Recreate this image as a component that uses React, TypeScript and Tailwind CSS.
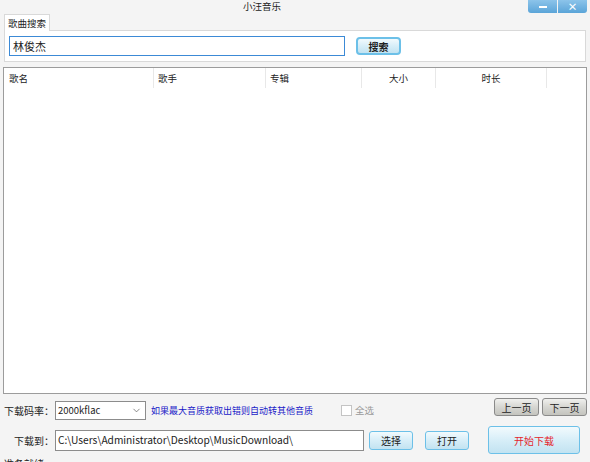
import { ChevronDown } from 'lucide-react';

const font = { fontFamily: '"Noto Sans CJK SC", "Noto Sans", sans-serif' };

function AeroButton({ label, className }: { label: string; className?: string }) {
  return (
    <button
      className={`flex shrink-0 items-center justify-center whitespace-nowrap rounded-[3px] border border-[#6cc0e8] bg-gradient-to-b from-[#f2fafd] via-[#d7eef8] to-[#c2e3f1] text-[10px] text-[#222] ${className ?? ''}`}
    >
      {label}
    </button>
  );
}

function GreyButton({ label }: { label: string }) {
  return (
    <button className="flex h-[18px] w-[45px] items-center justify-center whitespace-nowrap rounded-[3px] border border-[#8a8a8a] bg-gradient-to-b from-[#f0f0ee] via-[#d6d6d2] to-[#c4c4be] text-[10px] text-[#222]">
      {label}
    </button>
  );
}

export default function App() {
  const columns = [
    { name: '歌名', w: 'w-[150px]', align: 'text-left pl-[5px]' },
    { name: '歌手', w: 'w-[112px]', align: 'text-left pl-[4px]' },
    { name: '专辑', w: 'w-[96px]', align: 'text-left pl-[4px]' },
    { name: '大小', w: 'w-[74px]', align: 'text-center' },
    { name: '时长', w: 'w-[111px]', align: 'text-center' },
  ];

  return (
    <div className="relative h-[462px] w-[590px] overflow-hidden bg-[#f4f4f4] text-[10px] text-[#222]" style={font}>
      {/* title bar */}
      <div className="relative flex h-[14px] items-center justify-center pr-[66px]">
        <span className="text-[9.5px] leading-none">小汪音乐</span>
        <div className="absolute right-[3px] top-0 flex gap-px">
          <div className="flex h-[13px] w-[29px] items-center justify-center rounded-bl-[3px] bg-gradient-to-b from-[#8cc4ea] to-[#5aa4d8]">
            <div className="h-[2px] w-[8px] bg-white" />
          </div>
          <div className="flex h-[13px] w-[29px] items-center justify-center rounded-br-[3px] bg-gradient-to-b from-[#8cc4ea] to-[#5aa4d8] text-[10px] font-bold leading-none text-white">
            ×
          </div>
        </div>
      </div>

      {/* tab */}
      <div className="px-[4px]">
        <div className="flex">
          <div className="relative z-10 -mb-px flex h-[17px] w-[46px] items-center justify-center whitespace-nowrap border border-b-0 border-[#d9d9d9] bg-white text-[9.5px]">
            歌曲搜索
          </div>
        </div>
        <div className="flex h-[32px] items-center gap-[11px] border border-[#d9d9d9] bg-white pl-[4px]">
          <div className="flex h-[20px] w-[336px] items-center border border-[#3c8ad6] bg-white pl-[3px] text-[11px]">林俊杰</div>
          <AeroButton label="搜索" className="h-[18px] w-[45px] rounded-[4px] border-2 font-bold" />
        </div>
      </div>

      {/* list */}
      <div className="mx-[3px] mt-[5px] h-[327px] border border-[#9c9c9c] bg-white">
        <div className="flex h-[20px] items-center">
          {columns.map((c) => (
            <div key={c.name} className={`${c.w} ${c.align} h-full border-r border-[#e8e8e8] text-[9.5px] leading-[20px]`}>
              {c.name}
            </div>
          ))}
        </div>
      </div>

      {/* row 1 */}
      <div className="mt-[4px] flex h-[22px] items-start">
        <span className="ml-[4px] mt-[5px] w-[51px] shrink-0 whitespace-nowrap text-[10px]">下载码率：</span>
        <div className="mt-[3px] flex h-[19px] w-[91px] shrink-0 items-center justify-between border border-[#8c8c8c] bg-white pl-[2px] pr-[3px] text-[9.5px]">
          2000kflac
          <ChevronDown size={11} strokeWidth={1.5} className="text-[#555]" />
        </div>
        <span className="ml-[5px] mt-[6px] w-[162px] shrink-0 whitespace-nowrap text-[9px] text-[#1a1ac8]">
          如果最大音质获取出错则自动转其他音质
        </span>
        <div className="ml-[28px] mt-[7px] h-[11px] w-[11px] shrink-0 border border-[#c4c4c4] bg-white" />
        <span className="ml-[3px] mt-[5px] whitespace-nowrap text-[9.5px] text-[#999]">全选</span>
        <div className="ml-auto mr-[3px] flex gap-[3px]">
          <GreyButton label="上一页" />
          <GreyButton label="下一页" />
        </div>
      </div>

      {/* row 2 */}
      <div className="mt-[6px] flex h-[28px] items-center">
        <span className="ml-[14px] w-[41px] shrink-0 whitespace-nowrap text-[10px]">下载到：</span>
        <div className="flex h-[21px] w-[309px] shrink-0 items-center whitespace-nowrap border border-[#8c8c8c] bg-white pl-[2px] text-[10.2px]">
          C:\Users\Administrator\Desktop\MusicDownload\
        </div>
        <AeroButton label="选择" className="ml-[5px] h-[19px] w-[44px]" />
        <AeroButton label="打开" className="ml-[12px] h-[19px] w-[44px]" />
        <AeroButton label="开始下载" className="ml-[19px] h-[28px] w-[92px] border-[#5fb8e6] !text-[#e5242b]" />
      </div>

      <div className="mt-[2px] ml-[4px] whitespace-nowrap text-[10px]">准备就绪</div>
    </div>
  );
}
